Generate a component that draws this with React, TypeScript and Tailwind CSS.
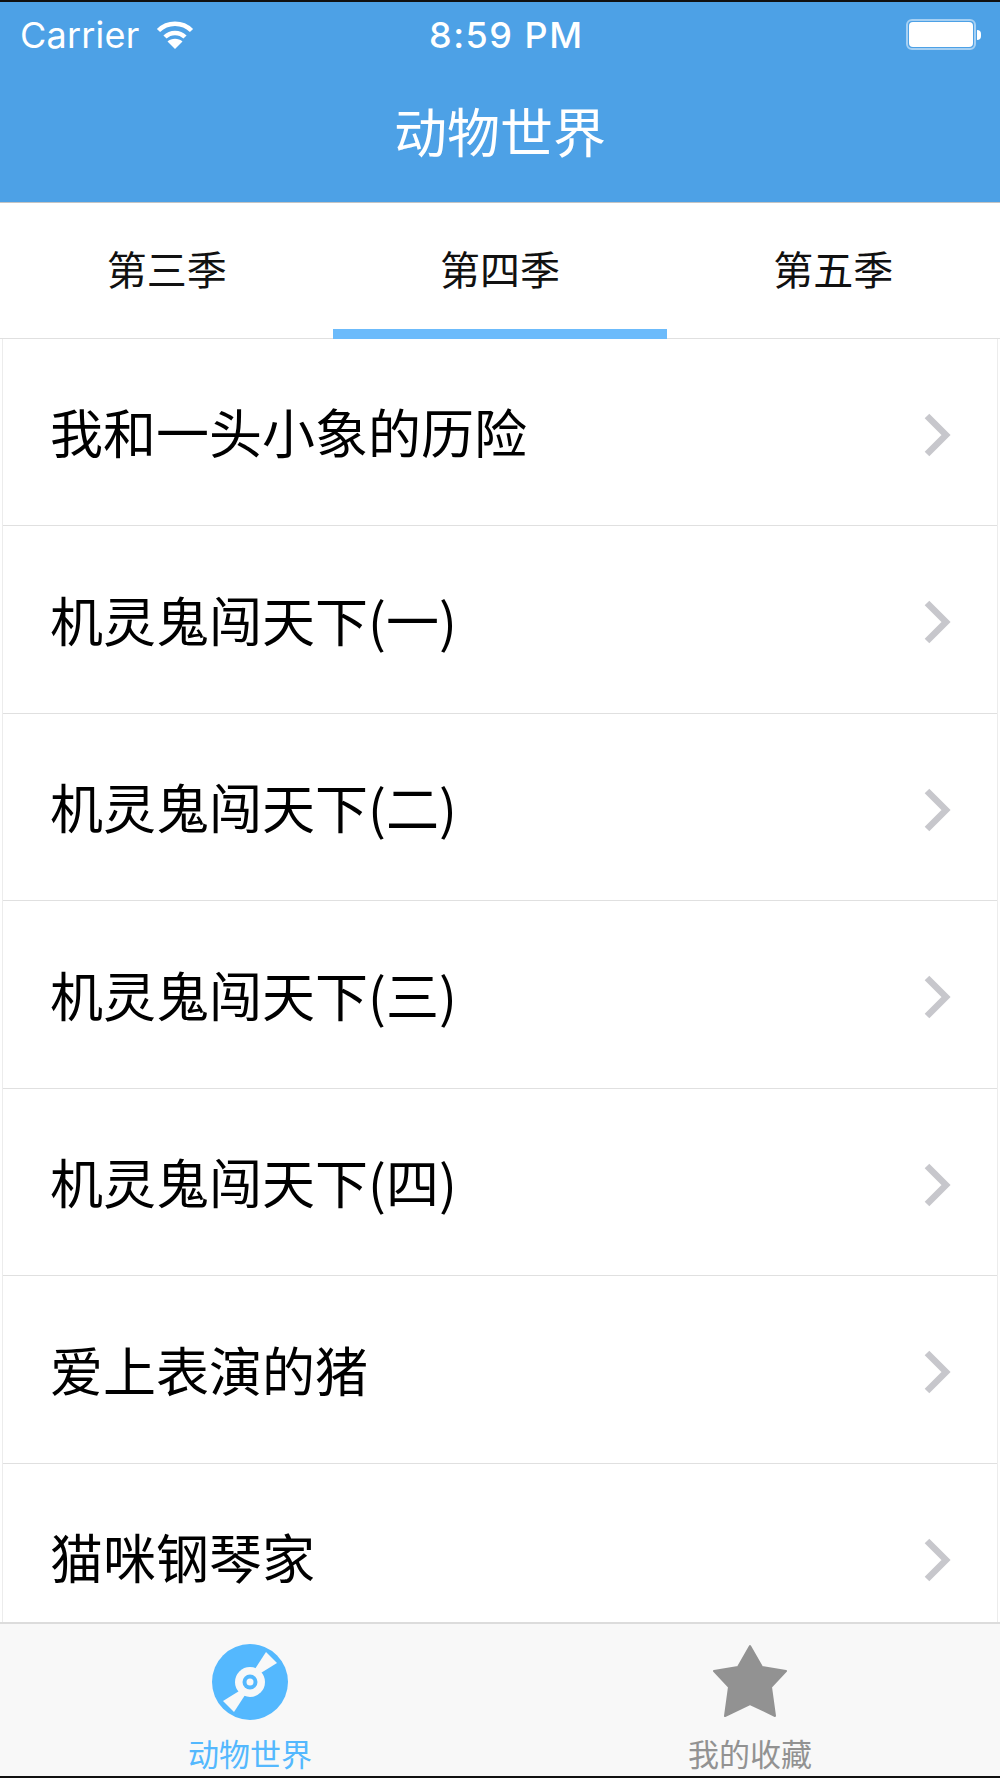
import { ReactNode } from "react";

const CJK = "font-['Noto_Sans_CJK_SC','Liberation_Sans',sans-serif]";

const tabs = ["第三季", "第四季", "第五季"];
const rows = [
  "我和一头小象的历险",
  "机灵鬼闯天下(一)",
  "机灵鬼闯天下(二)",
  "机灵鬼闯天下(三)",
  "机灵鬼闯天下(四)",
  "爱上表演的猪",
  "猫咪钢琴家",
];

function Wifi() {
  return (
    <svg width="38" height="30" viewBox="0 0 38 30" fill="none" stroke="white" strokeWidth="4.5">
      <path d="M2.5 10.5C11.5 1.5 26.5 1.5 35.5 10.5" />
      <path d="M9 17C14.5 11.5 23.5 11.5 29 17" />
      <path d="M19 29L11.5 21.5C15.5 17.8 22.5 17.8 26.5 21.5Z" fill="white" stroke="none" />
    </svg>
  );
}

function Battery() {
  return (
    <div className="flex items-center">
      <div className="w-[70px] h-[31px] rounded-[6px] border-2 border-white/50 p-[1px]">
        <div className="w-full h-full rounded-[4px] bg-white" />
      </div>
      <div className="w-[4px] h-[10px] ml-[1px] rounded-r-full bg-white" />
    </div>
  );
}

function StatusBar() {
  return (
    <div className="relative h-[65px] flex items-center justify-between pl-[20px] pr-[19px] text-white font-['Inter',sans-serif] text-[36px]">
      <div className="flex items-center gap-[17px]">
        <span className="tracking-[0.2px]">Carrier</span>
        <Wifi />
      </div>
      <Battery />
      <span className="absolute left-[429px] top-[13px] leading-[40px] tracking-[1.5px] font-medium">8:59 PM</span>
    </div>
  );
}

function Chevron() {
  return (
    <svg width="28" height="44" viewBox="0 0 28 44" fill="none" stroke="#c7c7cc" strokeWidth="6.5" className="mt-[6px]">
      <path d="M4 3L23 22L4 41" />
    </svg>
  );
}

function Row({ children }: { children: ReactNode }) {
  return (
    <div className="h-[187.5px] shrink-0 flex items-center justify-between pl-[47px] pr-[46px] border-b border-[#e0e0e0]">
      <span className="text-[53px] text-black">{children}</span>
      <Chevron />
    </div>
  );
}

function DiscIcon() {
  return (
    <svg width="76" height="76" viewBox="0 0 76 76">
      <circle cx="38" cy="38" r="38" fill="#54b8fe" />
      <path d="M54 8L65 19L44 32L41 28Z" fill="#f8f8f8" />
      <path d="M22 68L11 57L32 44L35 48Z" fill="#f8f8f8" />
      <circle cx="38" cy="38" r="15" fill="#f8f8f8" />
      <circle cx="38" cy="38" r="7.5" fill="#54b8fe" />
      <circle cx="38" cy="38" r="3.5" fill="#f8f8f8" />
    </svg>
  );
}

function StarIcon() {
  return (
    <svg width="76" height="74" viewBox="-1 -1 76 74">
      <path
        d="M37 1L49 22L73 26L58 42L62 71L37 59L12 71L16 42L1 26L25 22Z"
        fill="#929292"
        stroke="#929292"
        strokeWidth="2"
        strokeLinejoin="round"
      />
    </svg>
  );
}

export default function App() {
  return (
    <div className={`w-[1000px] h-[1778px] flex flex-col overflow-hidden bg-white ${CJK}`}>
      <div className="h-[2px] shrink-0 bg-[#111]" />

      {/* Nav */}
      <div className="h-[201px] shrink-0 bg-[#4da1e6] border-b border-[#c4c4c4]">
        <StatusBar />
        <div className="h-[135px] flex items-center justify-center pb-[8px] text-white text-[53px]">动物世界</div>
      </div>

      {/* Tabs */}
      <div className="h-[135.5px] shrink-0 flex border-b border-[#e0e0e0]">
        {tabs.map((tab, i) => (
          <div key={tab} className="relative flex-1 flex items-center justify-center pb-[5px] text-[40px] text-[#111]">
            {tab}
            {i === 1 && <div className="absolute left-0 right-0 -bottom-[1px] h-[10px] bg-[#6cbbfb]" />}
          </div>
        ))}
      </div>

      {/* List */}
      <div className="flex-1 min-h-0 overflow-hidden flex flex-col mx-[2px] border-x border-[#ececec]">
        {rows.map((row) => (
          <Row key={row}>{row}</Row>
        ))}
      </div>

      {/* Tab bar */}
      <div className="h-[154px] shrink-0 flex bg-[#f8f8f8] border-t-2 border-[#dcdcdc]">
        <div className="flex-1 flex flex-col items-center pt-[20px]">
          <DiscIcon />
          <span className="mt-[11px] text-[31px] leading-[44px] text-[#54b8fe]">动物世界</span>
        </div>
        <div className="flex-1 flex flex-col items-center pt-[20px]">
          <StarIcon />
          <span className="mt-[13px] text-[31px] leading-[44px] text-[#929292]">我的收藏</span>
        </div>
      </div>

      <div className="h-[2px] shrink-0 bg-[#111]" />
    </div>
  );
}
